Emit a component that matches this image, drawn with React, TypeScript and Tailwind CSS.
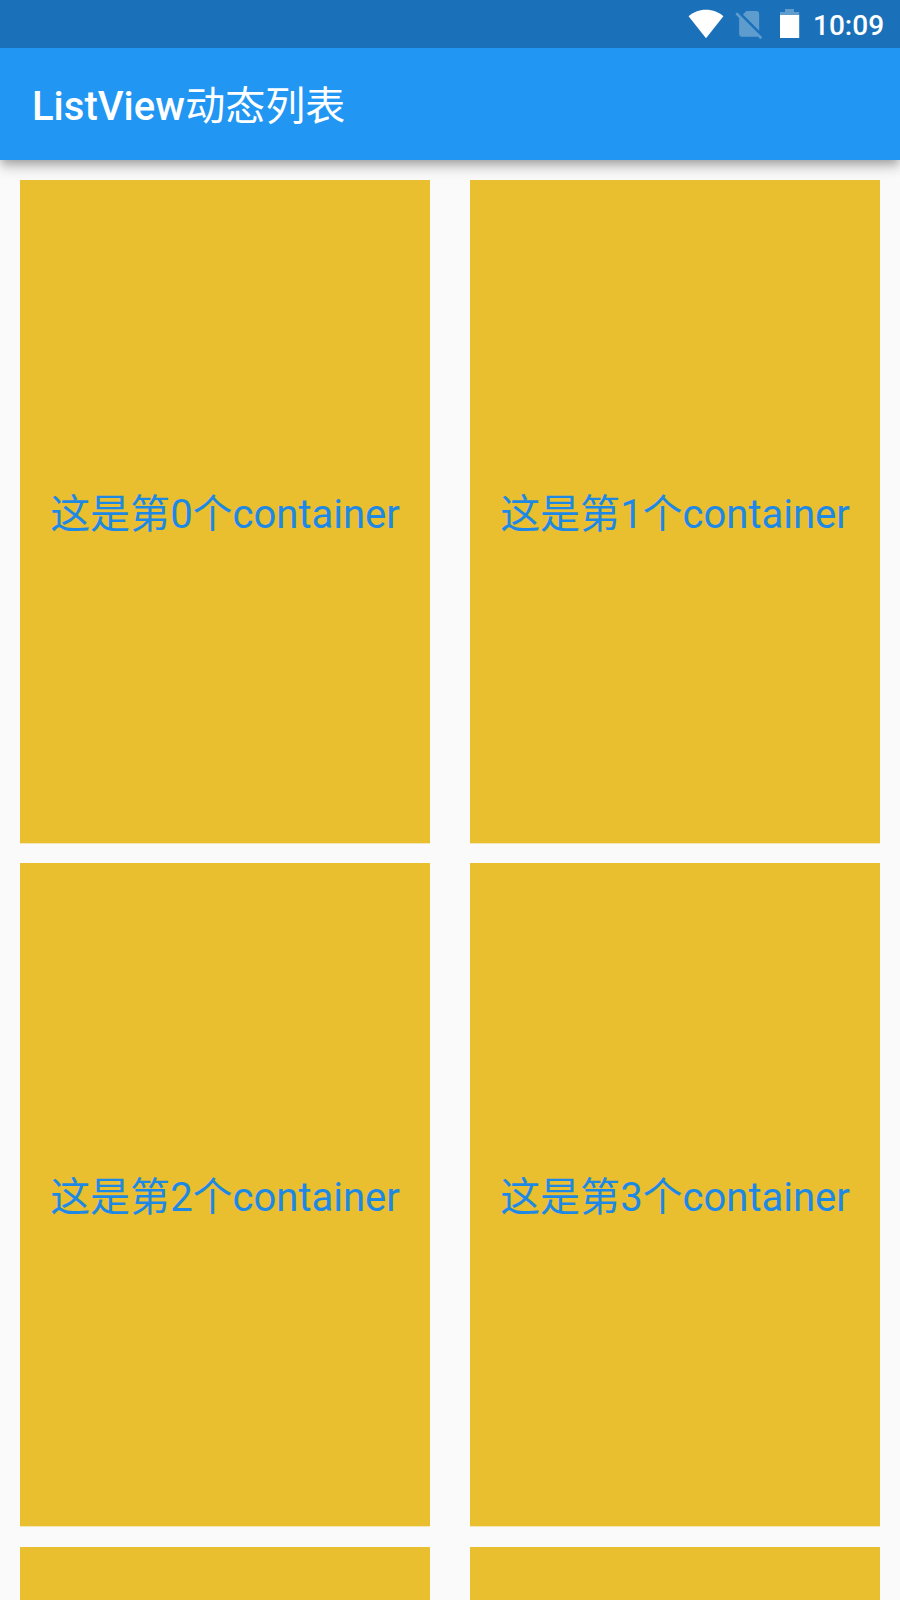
const rows = [
  [0, 1],
  [2, 3],
];

function StatusBar() {
  return (
    <div className="relative z-10 flex h-12 shrink-0 items-center justify-end bg-[#1a71b9] pr-4 text-white">
      <svg className="mr-2 h-12 w-9" viewBox="0 0 36 48" fill="currentColor">
        <path d="M18 38.2L0.6 16.3C5.2 12.3 11 9.8 18 9.8S30.8 12.3 35.4 16.3Z" />
      </svg>
      <svg className="mr-3.5 h-12 w-[34px] opacity-30" viewBox="0 0 34 48" fill="currentColor">
        <g transform="translate(0 6.8) scale(1.43)">
          <path d="M18.99 5c0-1.1-.89-2-1.99-2h-7L7.66 5.34 19 16.68 18.99 5zM3.65 3.88L2.38 5.15 5 7.77V19c0 1.1.9 2 2 2h10.01c.35 0 .67-.1.96-.26l1.88 1.88 1.27-1.27L3.65 3.88z" />
        </g>
      </svg>
      <svg className="mr-[13px] h-12 w-5" viewBox="0 0 20 48" fill="currentColor">
        <path d="M5 9h9v3h5.2v3H0v-3h5z" opacity=".3" />
        <path d="M0 15h19.2v23H0z" />
      </svg>
      <span className="w-[71px] pt-[3px] text-right text-[28px] font-medium">10:09</span>
    </div>
  );
}

function Tile({ index }: { index: number }) {
  return (
    <div className="flex h-[664px] items-center justify-center border-b border-[#f4e6b6] bg-[#e9bf30] pt-1.5 text-[40px] text-[#1e88e5]">
      这是第{index}个container
    </div>
  );
}

export default function App() {
  return (
    <div className="flex h-[1600px] w-[900px] flex-col overflow-hidden bg-[#fafafa] font-[Roboto,'Noto_Sans_CJK_SC',sans-serif]">
      <StatusBar />
      <header className="flex h-28 shrink-0 items-center bg-[#2196f3] px-8 pt-1.5 text-white shadow-[0_4px_8px_-2px_rgba(0,0,0,0.2),0_8px_10px_0_rgba(0,0,0,0.14),0_2px_20px_0_rgba(0,0,0,0.12)]">
        <h1 className="text-[40px] font-medium">
          ListView<span className="ml-[0.5px] font-normal">动态列表</span>
        </h1>
      </header>
      <main className="flex grow flex-col px-5 pt-5">
        {rows.map((row) => (
          <div key={row[0]} className="mb-[19px] grid grid-cols-2 gap-x-10 last:mb-0">
            {row.map((index) => (
              <Tile key={index} index={index} />
            ))}
          </div>
        ))}
        <div className="mt-px grid grow grid-cols-2 gap-x-10">
          <div className="bg-[#e9bf30]" />
          <div className="bg-[#e9bf30]" />
        </div>
      </main>
    </div>
  );
}
